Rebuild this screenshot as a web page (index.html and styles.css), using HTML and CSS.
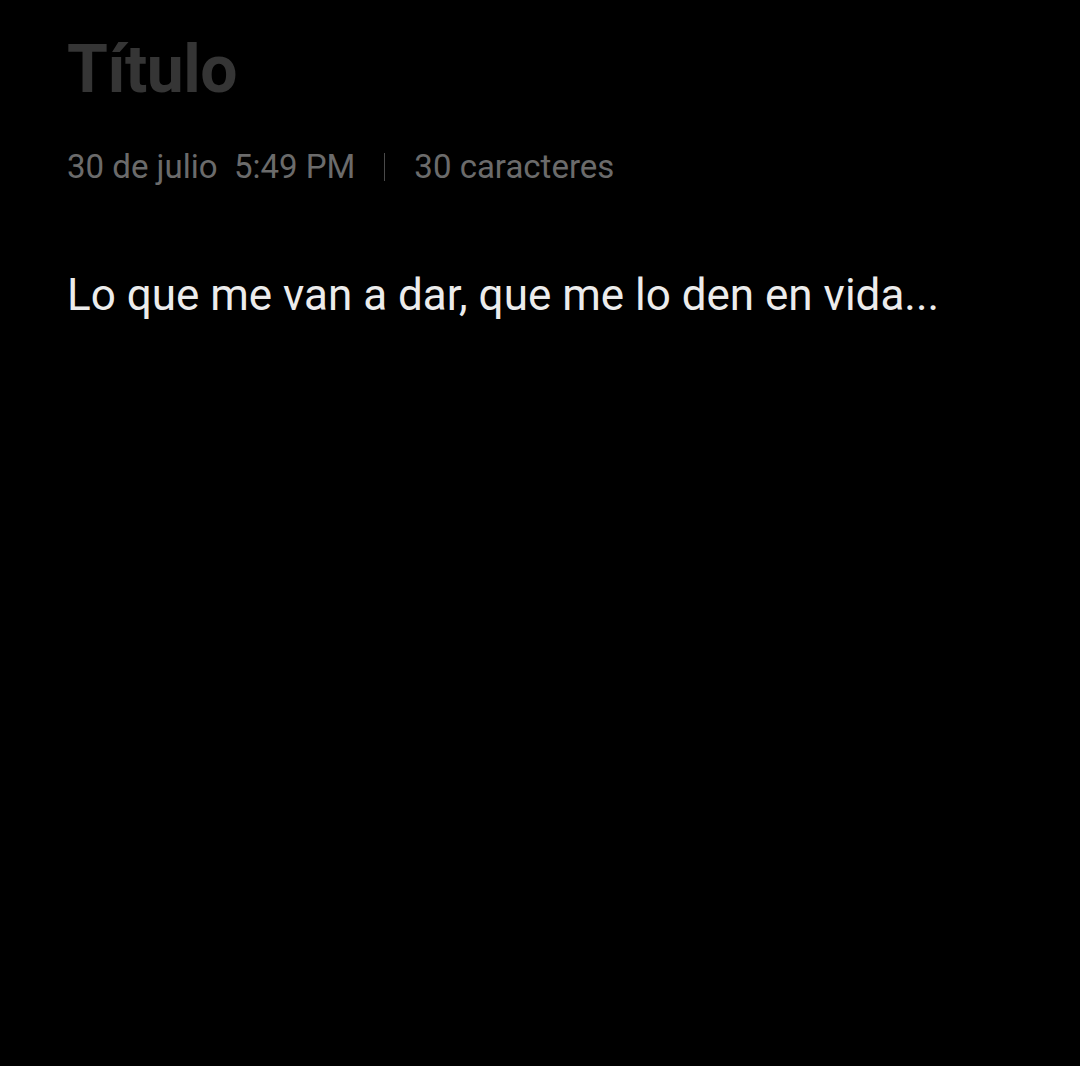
FILE: index.html
```html
<!DOCTYPE html>
<html lang="es">
<head>
  <meta charset="UTF-8" />
  <meta name="viewport" content="width=device-width, initial-scale=1.0" />
  <title>Nota</title>
  <link rel="stylesheet" href="styles.css">
</head>
<body>
  <!-- Note editor -->
  <main class="note">
    <h1 class="note-title">Título</h1>

    <div class="note-meta">
      <span class="meta-date">30 de julio&nbsp; 5:49 PM</span>
      <span class="meta-sep"></span>
      <span class="meta-count">30 caracteres</span>
    </div>

    <p class="note-body">Lo que me van a dar, que me lo den en vida...</p>
  </main>
</body>
</html>
```

FILE: styles.css
```css
:root {
  --bg-color: #000000;
  --title-color: #353535;
  --meta-color: #6b6b6b;
  --sep-color: #4a4a4a;
  --text-color: #ececec;
}

* {
  margin: 0;
  padding: 0;
  box-sizing: border-box;
}

html, body {
  height: 100%;
}

body {
  background-color: var(--bg-color);
  font-family: Roboto, 'Noto Sans', sans-serif;
  color: var(--text-color);
}

.note {
  padding: 28px 67px;
}

.note-title {
  font-size: 66px;
  font-weight: 700;
  line-height: 84px;
  color: var(--title-color);
  letter-spacing: -0.5px;
}

.note-meta {
  display: flex;
  align-items: center;
  margin-top: 35px;
  font-size: 33px;
  line-height: 40px;
  color: var(--meta-color);
}

.meta-sep {
  width: 1px;
  height: 28px;
  background-color: var(--sep-color);
  margin: 0 29px;
}

.note-body {
  margin-top: 80px;
  font-size: 44px;
  line-height: 56px;
}
```
